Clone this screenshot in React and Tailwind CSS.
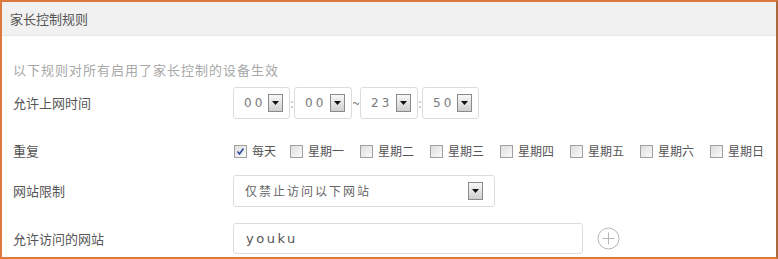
import React from 'react';

const font = { fontFamily: '"Noto Sans CJK SC", "Liberation Sans", sans-serif' };

const DropButton = () => (
  <span className="flex items-center justify-center w-[15px] h-[18px] border border-[#8a8a8a] bg-gradient-to-b from-[#f8f8f8] to-[#cfcfcf] shrink-0">
    <svg width="7" height="4" viewBox="0 0 7 4">
      <polygon points="0,0 7,0 3.5,4" fill="#111" />
    </svg>
  </span>
);

const TimeSelect = ({ value, w }) => (
  <div className={`flex items-center justify-between h-[32px] border border-[#dcdcdc] rounded-[3px] pl-[10px] pr-[6px] shrink-0 ${w}`}>
    <span className="text-[12px] tracking-[3px] text-[#7a7a7a]" style={{ fontFamily: '"DejaVu Sans", sans-serif' }}>{value}</span>
    <DropButton />
  </div>
);

const Checkbox = ({ checked }) => (
  <span className="flex items-center justify-center w-[13px] h-[13px] border border-[#a0a0a0] bg-gradient-to-br from-[#dedede] to-[#fafafa] shrink-0">
    {checked && (
      <svg width="9" height="9" viewBox="0 0 9 9">
        <path d="M1.5 4.5 L3.5 7 L7.5 1.5" stroke="#2a4c9a" strokeWidth="1.6" fill="none" />
      </svg>
    )}
  </span>
);

const Row = ({ label, className, children }) => (
  <div className={`flex items-center ${className}`}>
    <div className="w-[220px] text-[13px] text-[#555] shrink-0">{label}</div>
    {children}
  </div>
);

const days = ['每天', '星期一', '星期二', '星期三', '星期四', '星期五', '星期六', '星期日'];

export default function App() {
  return (
    <div style={font} className="w-[778px] h-[259px] overflow-hidden bg-white border-2 border-[#dc7a3e] border-r-[#a9693d] box-border">
      <div className="h-[34px] bg-[#f1f1f1] border-b border-[#e6e6e6] flex items-center pl-[8px] text-[13px] text-[#555]">
        家长控制规则
      </div>
      <div className="pl-[11px]">
        <div className="mt-[24px] h-[20px] flex items-center text-[13px] tracking-[1px] text-[#a8a8a8]">
          以下规则对所有启用了家长控制的设备生效
        </div>

        <Row label="允许上网时间" className="mt-[7px] h-[32px]">
          <TimeSelect value="00" w="w-[57px]" />
          <span className="w-[4px] text-center text-[12px] text-[#aaa]">:</span>
          <TimeSelect value="00" w="w-[58px]" />
          <span className="w-[8px] text-center text-[13px] text-[#777]">~</span>
          <TimeSelect value="23" w="w-[58px]" />
          <span className="w-[4px] text-center text-[12px] text-[#aaa]">:</span>
          <TimeSelect value="50" w="w-[57px]" />
        </Row>

        <Row label="重复" className="mt-[22px] h-[20px]">
          <div className="flex items-center pl-[1px] whitespace-nowrap">
            {days.map((d, i) => (
              <label key={d} className={`flex items-center gap-[5px] text-[12px] text-[#555] shrink-0 whitespace-nowrap ${i === 0 ? 'mr-[14px]' : 'mr-[16px]'}`}>
                <Checkbox checked={i === 0} />
                <span>{d}</span>
              </label>
            ))}
          </div>
        </Row>

        <Row label="网站限制" className="mt-[14px] h-[32px]">
          <div className="flex items-center justify-between w-[262px] h-[32px] border border-[#dcdcdc] rounded-[3px] pl-[11px] pr-[11px]">
            <span className="text-[12px] tracking-[2px] text-[#666]">仅禁止访问以下网站</span>
            <DropButton />
          </div>
        </Row>

        <Row label="允许访问的网站" className="mt-[16px] h-[31px]">
          <div className="flex items-center w-[350px] h-[31px] border border-[#dcdcdc] rounded-[3px] pl-[12px]">
            <span className="text-[13px] tracking-[2.5px] text-[#555]" style={{ fontFamily: '"DejaVu Sans", sans-serif' }}>youku</span>
          </div>
          <svg className="ml-[14px]" width="23" height="23" viewBox="0 0 23 23">
            <circle cx="11.5" cy="11.5" r="10.5" fill="none" stroke="#b5b5b5" strokeWidth="1" />
            <path d="M11.5 5.5 V17.5 M5.5 11.5 H17.5" stroke="#b5b5b5" strokeWidth="1" />
          </svg>
        </Row>
      </div>
    </div>
  );
}
